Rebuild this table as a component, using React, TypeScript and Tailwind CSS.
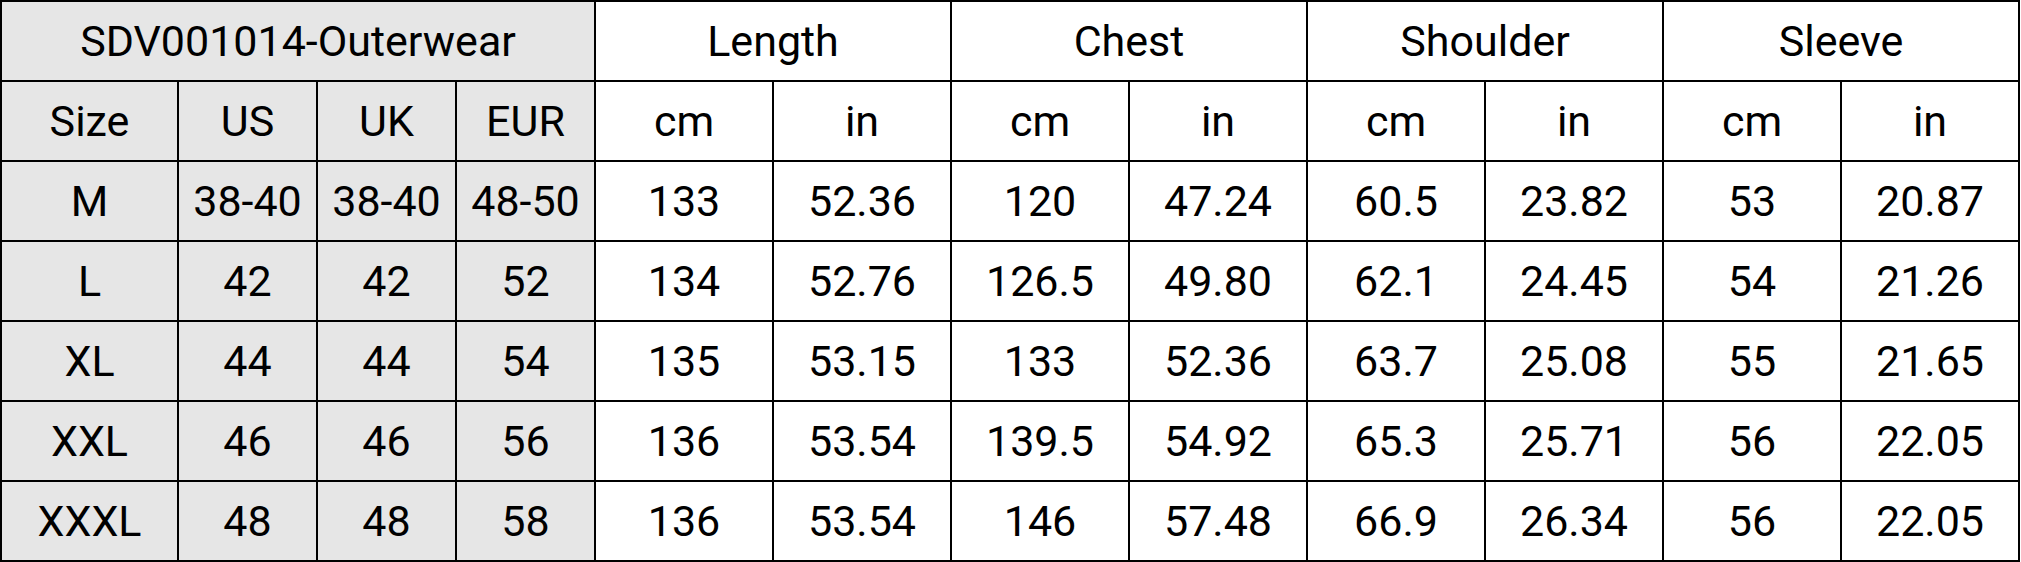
import React from "react"
import clsx from "clsx"

const rows = [
  ["M", "38-40", "38-40", "48-50", "133", "52.36", "120", "47.24", "60.5", "23.82", "53", "20.87"],
  ["L", "42", "42", "52", "134", "52.76", "126.5", "49.80", "62.1", "24.45", "54", "21.26"],
  ["XL", "44", "44", "54", "135", "53.15", "133", "52.36", "63.7", "25.08", "55", "21.65"],
  ["XXL", "46", "46", "56", "136", "53.54", "139.5", "54.92", "65.3", "25.71", "56", "22.05"],
  ["XXXL", "48", "48", "58", "136", "53.54", "146", "57.48", "66.9", "26.34", "56", "22.05"],
]

const measures = ["Length", "Chest", "Shoulder", "Sleeve"]

const Cell = ({ children, gray, span }: { children: React.ReactNode; gray?: boolean; span?: 2 | 4 }) => (
  <div
    className={clsx("flex h-[80px] items-center justify-center border-r-2 border-b-2 border-black whitespace-nowrap", {
      "bg-[#e6e6e6]": gray,
      "col-span-2": span === 2,
      "col-span-4": span === 4,
    })}
  >
    {children}
  </div>
)

export default function App() {
  return (
    <div className="h-[562px] w-[2021px] bg-white">
      <div
        className="grid w-max grid-cols-[177px_139px_139px_139px_repeat(8,178px)] border-t-2 border-l-2 border-black font-['Roboto',sans-serif] text-[43px] leading-none text-black"
      >
        {/* шапка */}
        <Cell gray span={4}>SDV001014-Outerwear</Cell>
        {measures.map((m) => (
          <Cell key={m} span={2}>{m}</Cell>
        ))}

        <Cell gray>Size</Cell>
        <Cell gray>US</Cell>
        <Cell gray>UK</Cell>
        <Cell gray>EUR</Cell>
        {measures.map((m) => (
          <React.Fragment key={m}>
            <Cell>cm</Cell>
            <Cell>in</Cell>
          </React.Fragment>
        ))}

        {/* размеры */}
        {rows.map((row) =>
          row.map((v, i) => (
            <Cell key={row[0] + i} gray={i < 4}>
              {v}
            </Cell>
          ))
        )}
      </div>
    </div>
  )
}
